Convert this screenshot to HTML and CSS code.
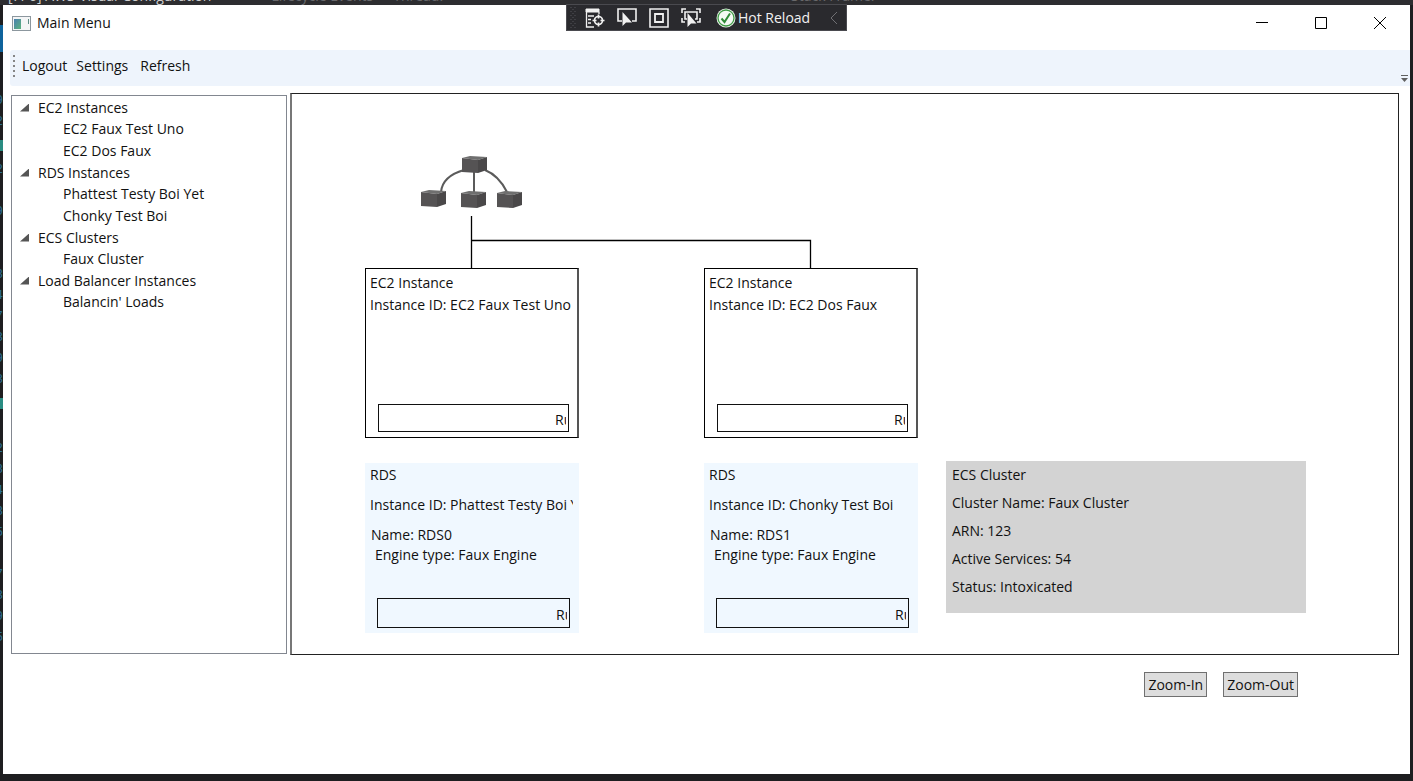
FILE: index.html
```html
<!DOCTYPE html>
<html lang="en">
<head>
<meta charset="utf-8">
<title>Main Menu</title>
<meta name="viewport" content="width=device-width, initial-scale=1">
<link rel="stylesheet" href="styles.css">
</head>
<body>
<div class="ide-top" aria-hidden="true">
  <span class="ide-process">[7P6] AWS-Visual-Configuration</span>
  <span class="ide-label ide-events">Lifecycle Events</span>
  <span class="ide-label ide-thread">Thread:</span>
  <span class="ide-label ide-stack">Stack Frame:</span>
</div>

<div class="desktop">
  <div class="ide-gutter" aria-hidden="true">
    <i class="gutter-blue"></i>
    <span>9</span><span>2</span><i class="gutter-teal"></i><span>2</span><span></span><span>9</span><span></span><span></span><span>8</span><span>4</span><span>7</span><span>3</span><span>9</span><span>3</span><i class="gutter-teal"></i><span></span><span>2</span><span>8</span><span>4</span><span>8</span><span>5</span><span></span><span>7</span><span>3</span><span>9</span><span>5</span>
  </div>

  <div class="window">
    <header class="titlebar">
      <svg class="app-icon" width="19" height="15" viewBox="0 0 19 15">
        <defs><linearGradient id="app" x1="0" y1="0" x2="1" y2="1"><stop offset="0" stop-color="#4a7fb0"/><stop offset="1" stop-color="#5bb37c"/></linearGradient></defs>
        <rect x=".5" y=".5" width="18" height="14" fill="#f4f5f6" stroke="#8c979e"/>
        <rect x="2" y="3" width="7" height="10" fill="url(#app)"/>
        <path d="M16.500 3v5" stroke="#5f8d86" fill="none"/>
      </svg>
      <h1 class="title">Main Menu</h1>
      <div class="window-controls">
        <button type="button" aria-label="Minimize"><svg width="13" height="13" viewBox="0 0 13 13"><path d="M0 5.500h12"/></svg></button>
        <button type="button" aria-label="Maximize"><svg width="13" height="13" viewBox="0 0 13 13"><path d="M.5 .5h11v11h-11z"/></svg></button>
        <button type="button" aria-label="Close"><svg width="13" height="13" viewBox="0 0 13 13"><path d="M0 0l12 12M12 0L0 12"/></svg></button>
      </div>
    </header>

    <nav class="toolbar" aria-label="Main">
      <svg class="grip" width="3" height="24" viewBox="0 0 3 24"><path d="M1 1v22" stroke="#858585" stroke-width="2" stroke-dasharray="2 3"/></svg>
      <button type="button">Logout</button>
      <button type="button">Settings</button>
      <button type="button" class="refresh">Refresh</button>
      <button type="button" class="overflow" aria-label="More"><svg width="7" height="7" viewBox="0 0 7 7"><path d="M0 .5h7" stroke="#606060"/><path d="M0 3h7L3.500 7z" fill="#606060"/></svg></button>
    </nav>

    <main class="content">
      <aside class="tree">
        <details open>
          <summary>EC2 Instances</summary>
          <ul><li>EC2 Faux Test Uno</li><li>EC2 Dos Faux</li></ul>
        </details>
        <details open>
          <summary>RDS Instances</summary>
          <ul><li>Phattest Testy Boi Yet</li><li>Chonky Test Boi</li></ul>
        </details>
        <details open>
          <summary>ECS Clusters</summary>
          <ul><li>Faux Cluster</li></ul>
        </details>
        <details open>
          <summary>Load Balancer Instances</summary>
          <ul><li>Balancin' Loads</li></ul>
        </details>
      </aside>

      <section class="canvas" aria-label="Diagram">
        <svg class="links" width="700" height="200" viewBox="0 0 700 200">
          <g fill="none" stroke="#5b5b5b" stroke-width="2">
            <path d="M172 76C158 80 150 87 149 98M182 77v21M193 76C203 80 210 88 215 98"/>
          </g>
          <g id="cube">
            <path d="M170 64l8-2 17 1-9 3z" fill="#6f6f6f"/>
            <path d="M170 64l16 2v13l-16-1z" fill="#555354"/>
            <path d="M186 66l9-3v13l-9 3z" fill="#4a4849"/>
          </g>
          <use href="#cube" x="-41" y="34"/>
          <use href="#cube" x="-1" y="35"/>
          <use href="#cube" x="35" y="35"/>
          <path d="M179.500 122v52M179.500 146.500h339V174" fill="none" stroke="#000" stroke-width="1.300"/>
        </svg>

        <article class="node ec2 col-a">
          <p>EC2 Instance</p>
          <p>Instance ID: EC2 Faux Test Uno</p>
          <div class="status"><span>Running</span></div>
        </article>
        <article class="node ec2 col-b">
          <p>EC2 Instance</p>
          <p>Instance ID: EC2 Dos Faux</p>
          <div class="status"><span>Running</span></div>
        </article>
        <article class="node rds col-a">
          <p>RDS</p>
          <p>Instance ID: Phattest Testy Boi Yet</p>
          <p class="name">Name: RDS0</p>
          <p class="engine">Engine type: Faux Engine</p>
          <div class="status"><span>Running</span></div>
        </article>
        <article class="node rds col-b">
          <p>RDS</p>
          <p>Instance ID: Chonky Test Boi</p>
          <p class="name">Name: RDS1</p>
          <p class="engine">Engine type: Faux Engine</p>
          <div class="status"><span>Running</span></div>
        </article>
        <article class="node ecs">
          <p>ECS Cluster</p>
          <p>Cluster Name: Faux Cluster</p>
          <p>ARN: 123</p>
          <p>Active Services: 54</p>
          <p>Status: Intoxicated</p>
        </article>
      </section>
    </main>

    <footer class="actions">
      <button type="button">Zoom-In</button>
      <button type="button">Zoom-Out</button>
    </footer>
  </div>
</div>

<div class="debugbar">
  <svg class="dots" width="7" height="21" viewBox="0 0 7 21"><path d="M1 0v21M5 0v21" stroke="#55555a" stroke-width="1" stroke-dasharray="1 3"/><path d="M3 2v19" stroke="#55555a" stroke-dasharray="1 3"/></svg>
  <button type="button" aria-label="Go to live visual tree"><svg width="20" height="20" viewBox="0 0 20 20" fill="none" stroke="#f1f1f1"><path d="M1 1h13v3H1z" fill="#f1f1f1"/><path d="M1.500 4v15H9M14 4v2M3 8h6M3 11.500h3M3 15h3" stroke-width="1.300"/><circle cx="13.500" cy="12.500" r="4" stroke-width="1.700"/><path d="M13.500 6.500v4M13.500 14.500v4M7.500 12.500h4M15.500 12.500h4" stroke-width="1.700"/></svg></button>
  <button type="button" aria-label="Select element"><svg width="20" height="20" viewBox="0 0 20 20"><path d="M5 13H1V1h18v12h-4" fill="none" stroke="#f1f1f1" stroke-width="1.600"/><path d="M5.500 4v14l3.500-3.500h6z" fill="#f1f1f1"/></svg></button>
  <button type="button" aria-label="Display layout adorners"><svg width="20" height="20" viewBox="0 0 20 20" fill="none" stroke="#f1f1f1"><path d="M1 1h18v18H1z" stroke-width="1.600"/><path d="M6 6h8v8H6z" stroke-width="1.800"/></svg></button>
  <button type="button" aria-label="Track focused element"><svg width="20" height="20" viewBox="0 0 20 20"><path d="M1 5V1h4M15 1h4v4M19 10v4h-3M1 10v4h3M6 11H4V4h12v7h-2" fill="none" stroke="#f1f1f1" stroke-width="1.600"/><path d="M6.500 5v14l3.500-3.500h5.500z" fill="#f1f1f1"/></svg></button>
  <button type="button" class="hot"><svg width="20" height="20" viewBox="0 0 20 20"><circle cx="10" cy="10" r="9.500" fill="#e9f5e9"/><circle cx="10" cy="10" r="8" fill="#f4faf4" stroke="#3f9a46" stroke-width="1.300"/><path d="M5.500 10.500l3 3.500 5.500-8.500" fill="none" stroke="#2f8b37" stroke-width="2"/></svg>Hot Reload</button>
  <button type="button" class="collapse" aria-label="Collapse"><svg width="8" height="14" viewBox="0 0 8 14"><path d="M7 1L1 7l6 6" fill="none" stroke="#707074"/></svg></button>
</div>
</body>
</html>
```
FILE: styles.css
```css
* { box-sizing: border-box; }

body {
  margin: 0;
  height: 100vh;
  display: flex;
  flex-direction: column;
  overflow: hidden;
  background: #1e1e20;
  color: #111;
  font: 14px/20px "Open Sans", "Noto Sans", sans-serif;
}

button {
  margin: 0;
  padding: 0;
  border: 0;
  background: none;
  color: inherit;
  font: inherit;
}

svg { display: block; }
h1, p, ul { margin: 0; padding: 0; }

/* IDE behind the window */
.ide-top {
  display: flex;
  align-items: flex-end;
  height: 5px;
  padding-left: 8px;
  overflow: hidden;
  background: #2d2d30;
  color: #d0d0d0;
  line-height: 18px;
  white-space: nowrap;
}
.ide-label { color: #68686b; }
.ide-events { margin-left: 60px; }
.ide-thread { margin-left: 20px; }
.ide-stack { margin-left: 348px; }

.desktop {
  flex: 1;
  display: flex;
  min-height: 0;
  padding: 0 3px 7px 0;
}
.ide-gutter {
  flex: none;
  width: 3px;
  overflow: hidden;
  color: #2b6f8f;
  font: 13px/21px "Liberation Mono", monospace;
}
.ide-gutter span {
  display: flex;
  justify-content: flex-end;
  height: 21px;
}
.ide-gutter i { display: block; }
.gutter-blue {
  height: 27px;
  margin: 20px 0 38px;
  background: #0e639c;
}
.gutter-teal {
  height: 11px;
  margin: 8px 0;
  background: #2a8c82;
}

.window {
  flex: 1;
  display: flex;
  flex-direction: column;
  min-width: 0;
  background: #fff;
}

.titlebar {
  display: flex;
  align-items: center;
  height: 36px;
  padding-left: 9px;
  gap: 6px;
}
.title {
  flex: 1;
  font-size: 14px;
  font-weight: 400;
}
.window-controls { display: flex; }
.window-controls button {
  display: grid;
  place-items: center;
  width: 59px;
  height: 36px;
}
.window-controls path { fill: none; stroke: #000; }

.toolbar {
  display: flex;
  align-items: center;
  gap: 9px;
  height: 36px;
  margin: 9px 0 7px 7px;
  padding: 0 2px 4px 3px;
  border-radius: 3px 0 0 3px;
  background: #eef4fc;
}
.toolbar .grip { margin-right: -3px; }
.toolbar .refresh { margin-left: 3px; }
.toolbar .overflow {
  align-self: flex-end;
  margin-left: auto;
}

.content {
  flex: 1;
  display: flex;
  align-items: stretch;
  gap: 3px;
  min-height: 0;
  padding: 0 11px 0 8px;
}

.tree {
  flex: none;
  width: 276px;
  margin: 2px 0 1px;
  padding: 1px 8px;
  border: 1px solid #828790;
}
.tree summary {
  display: flex;
  align-items: center;
  gap: 9px;
  height: 21px;
  list-style: none;
}
.tree summary::before {
  content: "";
  width: 9px;
  height: 8px;
  background: #555;
  clip-path: polygon(100% 0, 100% 100%, 0 100%);
}
.tree ul {
  padding-left: 43px;
  list-style: none;
}
.tree li { line-height: 22px; }

/* Diagram */
.canvas {
  position: relative;
  flex: 1;
  overflow: hidden;
  border: 1px solid #222;
  border-left: 2px solid #777;
}
.links {
  position: absolute;
  left: 0;
  top: 0;
}
.node {
  position: absolute;
  white-space: nowrap;
}
.col-a { left: 73px; }
.col-b { left: 412px; }
.node .status {
  overflow: hidden;
  border: 1px solid #111;
  padding: 0 2px 0 176px;
}
.node .status span {
  display: block;
  overflow: hidden;
}

.ec2 {
  top: 174px;
  display: flex;
  flex-direction: column;
  width: 214px;
  height: 170px;
  padding: 3px 8px 5px 4px;
  border: 1px solid #000;
  border-right: 2px solid #555;
}
.ec2 p { line-height: 22px; }
.ec2 .status {
  height: 28px;
  margin: auto 0 0 8px;
  line-height: 30px;
}

.rds {
  top: 369px;
  display: flex;
  flex-direction: column;
  width: 214px;
  height: 170px;
  padding: 2px 6px 5px 5px;
  background: #f0f8ff;
}
.rds p {
  overflow: hidden;
  margin-bottom: 10px;
}
.rds .name {
  margin-bottom: 0;
  padding-left: 1px;
}
.rds .engine {
  margin-bottom: 0;
  padding-left: 5px;
}
.rds .status {
  height: 30px;
  margin: auto 3px 0 7px;
  padding-left: 178px;
  line-height: 32px;
}

.ecs {
  left: 654px;
  top: 367px;
  width: 360px;
  padding: 0 6px 12px;
  background: #d3d3d3;
  line-height: 28px;
}

.actions {
  display: flex;
  justify-content: flex-end;
  align-items: flex-start;
  gap: 16px;
  height: 119px;
  padding: 17px 112px 0 0;
}
.actions button {
  height: 25px;
  padding: 0 3px;
  border: 1px solid #707070;
  background: #ddd;
}

/* Debugger toolbar floating above the window */
.debugbar {
  position: absolute;
  top: 4px;
  left: 566px;
  display: flex;
  align-items: center;
  gap: 12px;
  height: 27px;
  padding: 0 8px 0 3px;
  border: 1px solid #4a4a4f;
  background: #2a2a2e;
  color: #f1f1f1;
}
.debugbar .dots { margin-right: -4px; }
.debugbar .hot {
  display: flex;
  align-items: center;
  gap: 2px;
  margin-left: 3px;
}
.debugbar .collapse { margin-left: 8px; }
```
